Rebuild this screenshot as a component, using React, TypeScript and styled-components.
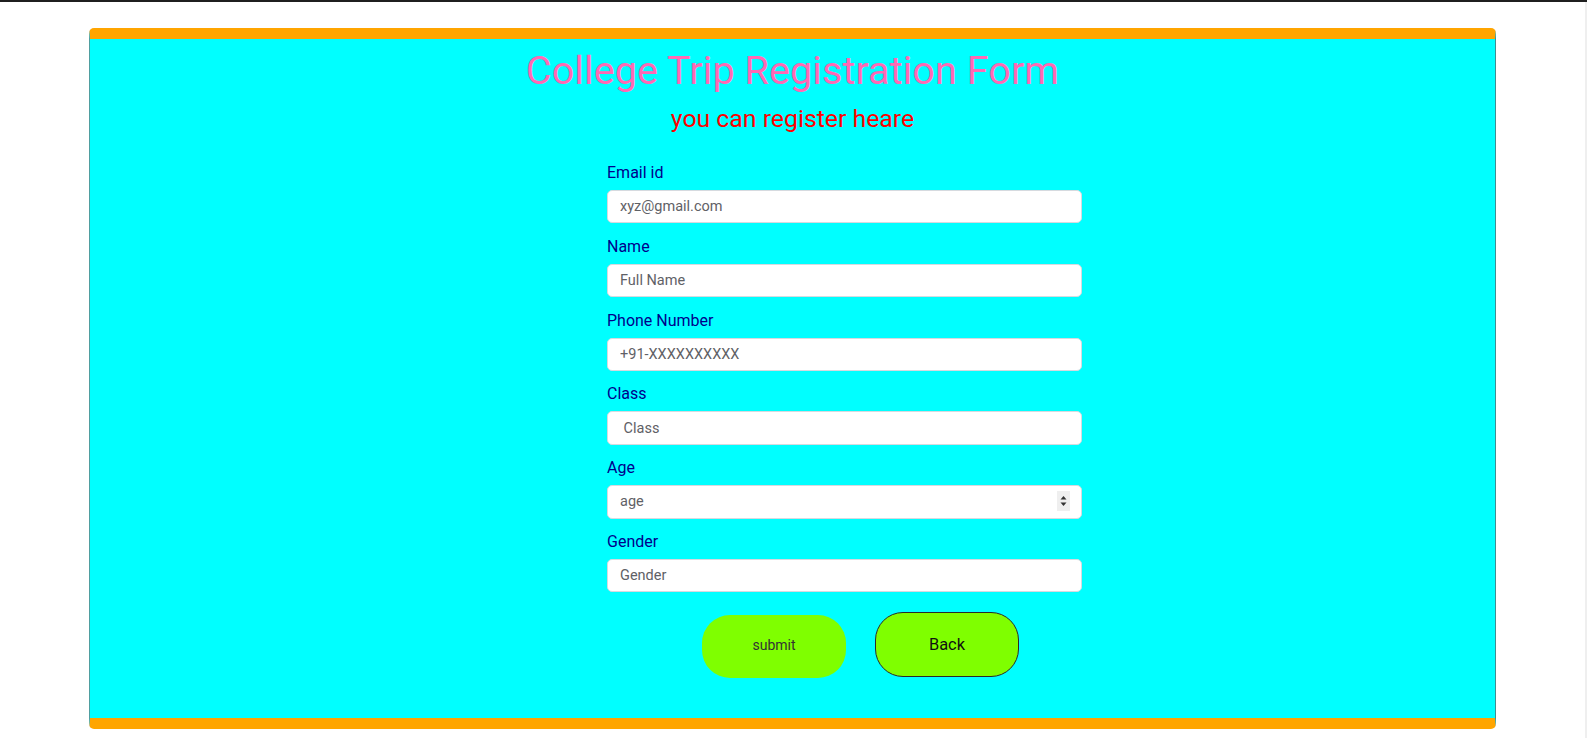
import React from "react";
import styled, { createGlobalStyle } from "styled-components";

const GlobalStyle = createGlobalStyle`
  html, body {
    margin: 0;
    padding: 0;
    background: #ffffff;
    font-family: Roboto, "Liberation Sans", Arial, sans-serif;
  }
  * { box-sizing: border-box; }
`;

const Page = styled.div`
  display: flex;
  flex-direction: column;
  width: 1587px;
  height: 738px;
  border-top: 2px solid #1f1f1f;
  overflow: hidden;
`;

const Body = styled.div`
  flex: 1;
  display: flex;
`;

const Main = styled.main`
  flex: 1;
  padding: 26px 89px 0;
`;

const ScrollEdge = styled.div`
  width: 2px;
  background: #efefef;
`;

const Card = styled.section`
  height: 701px;
  background: #00ffff;
  border-top: 11px solid #ffa500;
  border-bottom: 11px solid #ffa500;
  border-left: 1px solid #4f9fa0;
  border-right: 1px solid #3f8f90;
  border-radius: 5px;
  padding-top: 8px;
  display: flex;
  flex-direction: column;
`;

const Title = styled.h1`
  margin: 0 0 9px;
  text-align: center;
  font-size: 39.7px;
  line-height: 48px;
  font-weight: 400;
  color: #ff69b4;
`;

const Subtitle = styled.h4`
  margin: 0;
  text-align: center;
  font-size: 24.8px;
  line-height: 29px;
  font-weight: 400;
  color: #ff0000;
`;

const Form = styled.form`
  width: 475px;
  margin: 28px 0 0 517px;
  display: flex;
  flex-direction: column;
`;

const Group = styled.div`
  display: flex;
  flex-direction: column;
  margin-bottom: 11.4px;
`;

const Label = styled.label`
  font-size: 16px;
  line-height: 24px;
  color: #00008b;
  margin-bottom: 5px;
`;

const Field = styled.div`
  position: relative;
`;

const Input = styled.input`
  display: block;
  height: 33.4px;
  width: 100%;
  padding: 0 12px;
  font-family: Roboto, "Liberation Sans", Arial, sans-serif;
  font-size: 14.5px;
  color: #495057;
  background: #ffffff;
  border: 1px solid #d6dadf;
  border-radius: 5px;
  outline: none;
  -moz-appearance: textfield;
  &::placeholder {
    color: #5f6166;
  }
  &::-webkit-inner-spin-button,
  &::-webkit-outer-spin-button {
    -webkit-appearance: none;
    margin: 0;
  }
`;

const Spinner = styled.span`
  position: absolute;
  right: 12px;
  top: 6px;
  width: 13px;
  height: 20px;
  background: #efefef;
  display: flex;
  align-items: center;
  justify-content: center;
  pointer-events: none;
`;

const Buttons = styled.div`
  display: flex;
  align-items: flex-start;
  gap: 29px;
  padding-left: 95px;
  margin-top: 8px;
`;

const PillButton = styled.button<{ $outlined?: boolean }>`
  width: 144px;
  height: ${(p) => (p.$outlined ? "65px" : "63px")};
  margin-top: ${(p) => (p.$outlined ? "0" : "3px")};
  background: #7fff00;
  border: ${(p) => (p.$outlined ? "1px solid #2a2a2a" : "none")};
  border-radius: 28px;
  font-family: Roboto, "Liberation Sans", Arial, sans-serif;
  font-size: ${(p) => (p.$outlined ? "16.4px" : "14px")};
  color: ${(p) => (p.$outlined ? "#111111" : "#333333")};
  padding: ${(p) => (p.$outlined ? "0" : "0 0 2px")};
  cursor: pointer;
`;

const fields = [
  { id: "email", label: "Email id", type: "email", placeholder: "xyz@gmail.com" },
  { id: "name", label: "Name", type: "text", placeholder: "Full Name" },
  { id: "phone", label: "Phone Number", type: "tel", placeholder: "+91-XXXXXXXXXX" },
  { id: "class", label: "Class", type: "text", placeholder: " Class" },
  { id: "age", label: "Age", type: "number", placeholder: "age" },
  { id: "gender", label: "Gender", type: "text", placeholder: "Gender" },
];

function SpinArrows() {
  return (
    <svg width="7" height="12" viewBox="0 0 7 12">
      <path d="M3.5 1 L6.5 4.5 L0.5 4.5 Z" fill="#333" />
      <path d="M3.5 11 L6.5 7.5 L0.5 7.5 Z" fill="#333" />
    </svg>
  );
}

export default function App() {
  return (
    <>
      <GlobalStyle />
      <Page>
        <Body>
          <Main>
            <Card>
              <Title>College Trip Registration Form</Title>
              <Subtitle>you can register heare</Subtitle>
              <Form onSubmit={(e) => e.preventDefault()}>
                {fields.map((f) => (
                  <Group key={f.id}>
                    <Label htmlFor={f.id}>{f.label}</Label>
                    <Field>
                      <Input id={f.id} type={f.type} placeholder={f.placeholder} />
                      {f.type === "number" && (
                        <Spinner>
                          <SpinArrows />
                        </Spinner>
                      )}
                    </Field>
                  </Group>
                ))}
                <Buttons>
                  <PillButton type="submit">submit</PillButton>
                  <PillButton type="button" $outlined>
                    Back
                  </PillButton>
                </Buttons>
              </Form>
            </Card>
          </Main>
          <ScrollEdge />
        </Body>
      </Page>
    </>
  );
}
